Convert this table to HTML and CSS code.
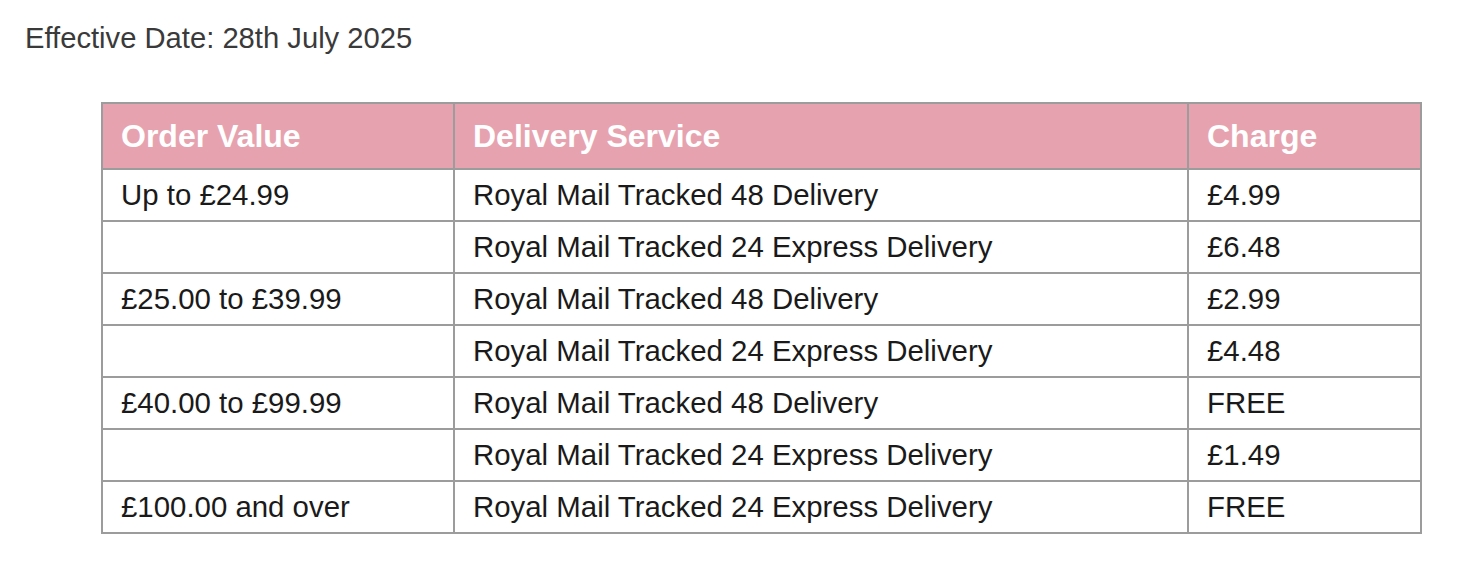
FILE: index.html
```html
<!DOCTYPE html>
<html lang="en">
<head>
  <meta charset="UTF-8" />
  <title>Delivery Charges</title>
  <link rel="stylesheet" href="styles.css">
</head>
<body>
  <p class="effective">Effective Date: 28th July 2025</p>

  <table class="rates">
    <thead>
      <tr>
        <th class="col-value">Order Value</th>
        <th class="col-service">Delivery Service</th>
        <th class="col-charge">Charge</th>
      </tr>
    </thead>
    <tbody>
      <tr>
        <td>Up to £24.99</td>
        <td>Royal Mail Tracked 48 Delivery</td>
        <td>£4.99</td>
      </tr>
      <tr>
        <td></td>
        <td>Royal Mail Tracked 24 Express Delivery</td>
        <td>£6.48</td>
      </tr>
      <tr>
        <td>£25.00 to £39.99</td>
        <td>Royal Mail Tracked 48 Delivery</td>
        <td>£2.99</td>
      </tr>
      <tr>
        <td></td>
        <td>Royal Mail Tracked 24 Express Delivery</td>
        <td>£4.48</td>
      </tr>
      <tr>
        <td>£40.00 to £99.99</td>
        <td>Royal Mail Tracked 48 Delivery</td>
        <td>FREE</td>
      </tr>
      <tr>
        <td></td>
        <td>Royal Mail Tracked 24 Express Delivery</td>
        <td>£1.49</td>
      </tr>
      <tr>
        <td>£100.00 and over</td>
        <td>Royal Mail Tracked 24 Express Delivery</td>
        <td>FREE</td>
      </tr>
    </tbody>
  </table>
</body>
</html>
```

FILE: styles.css
```css
body {
  font-family: 'Liberation Sans', Arial, sans-serif;
  background: #ffffff;
  margin: 0;
  padding: 21px 0 0 25px;
}

.effective {
  margin: 0;
  font-size: 29.2px;
  line-height: 34px;
  color: #3a3a3a;
}

.rates {
  margin: 47px 0 0 76px;
  width: 1321px;
  border-collapse: collapse;
  table-layout: fixed;
  font-size: 29.4px;
  color: #1a1a1a;
}

.col-value {
  width: 352px;
}

.col-service {
  width: 734px;
}

.rates th,
.rates td {
  box-sizing: border-box;
  border: 2px solid #9c9c9c;
  padding: 0 18px;
  text-align: left;
  height: 52px;
}

.rates th {
  background: #e6a3af;
  color: #ffffff;
  font-weight: bold;
  font-size: 32px;
  height: 66px;
}
```
